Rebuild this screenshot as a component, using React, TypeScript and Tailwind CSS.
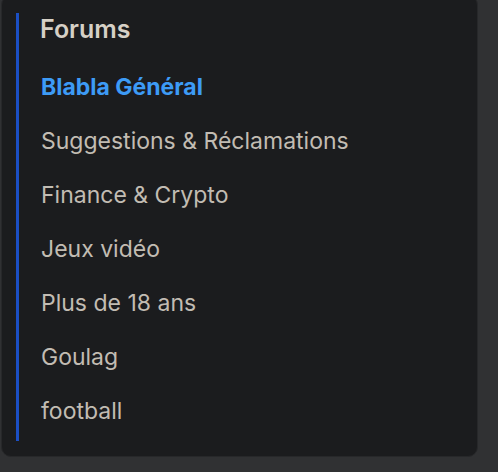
import React from "react";

const items = [
  "Suggestions & Réclamations",
  "Finance & Crypto",
  "Jeux vidéo",
  "Plus de 18 ans",
  "Goulag",
  "football",
];

export default function App() {
  return (
    <div
      className="w-[498px] h-[472px] bg-[#303133] overflow-hidden"
      style={{ fontFamily: "Inter, 'Noto Sans', sans-serif" }}
    >
      <div className="ml-[1px] -mt-[5px] w-[477px] h-[462px] rounded-[10px] bg-[#1b1c1e] border border-[#27282a] pt-[17px] pl-[14px]">
        <div className="border-l-[3px] border-[#1b4fc4] w-[340px] h-[428px] pl-[21px]">
          <div className="h-[32px] flex items-center text-[25px] font-semibold text-[#d6d0c6] leading-none">
            Forums
          </div>
          <div className="mt-[15px]">
            <div className="h-[54px] flex items-center pl-[1px] text-[23px] font-bold text-[#3d9bf6] leading-none">
              Blabla Général
            </div>
            {items.map((t) => (
              <div
                key={t}
                className="h-[54px] flex items-center pl-[1px] text-[23px] text-[#c2bcb3] leading-none"
              >
                {t}
              </div>
            ))}
          </div>
        </div>
      </div>
    </div>
  );
}
